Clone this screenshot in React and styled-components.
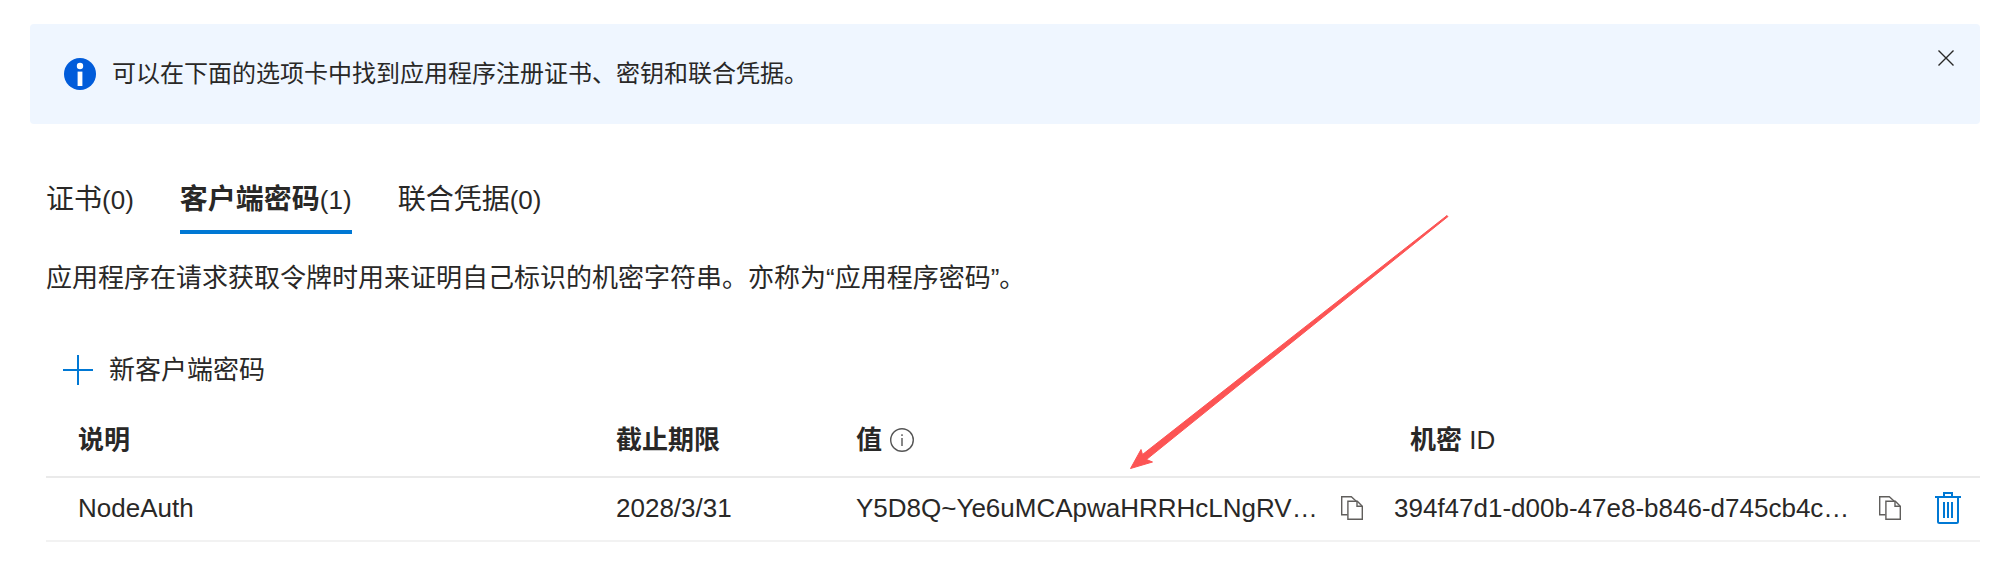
import React, { useState } from "react";
import styled, { createGlobalStyle } from "styled-components";

const GlobalStyle = createGlobalStyle`
  * {
    box-sizing: border-box;
  }

  body {
    margin: 0;
    background: #fff;
    color: #292827;
    font-family: "Liberation Sans", "Noto Sans CJK SC", sans-serif;
    font-size: 26px;
    line-height: 36px;
  }

  button {
    margin: 0;
    padding: 0;
    border: none;
    background: none;
    color: inherit;
    font: inherit;
    cursor: pointer;
  }

  svg {
    display: block;
    flex: none;
  }
`;

const StyledPage = styled.main`
  position: relative;
  padding: 24px 30px;
`;

const StyledBanner = styled.div`
  display: flex;
  align-items: flex-start;
  padding: 16px;
  border-radius: 4px;
  background: #eff6ff;
`;

const StyledMessage = styled.div`
  flex: 1;
  display: flex;
  align-items: center;
  gap: 16px;
  padding: 16px 18px;
  font-size: 24px;
`;

const StyledIconButton = styled.button`
  display: flex;
  align-items: center;
  justify-content: center;
  flex: none;
  width: 36px;
  height: 36px;
`;

const StyledContent = styled.section`
  padding-left: 16px;
`;

const StyledTabs = styled.div`
  display: flex;
  gap: 46px;
  margin-top: 46px;
`;

const StyledTab = styled.button`
  padding: 12px 0;
  border-bottom: 4px solid ${(props) => (props.$active ? "#0078d4" : "transparent")};
  font-size: 28px;
  font-weight: ${(props) => (props.$active ? 700 : 400)};
`;

const StyledCount = styled.span`
  font-size: 26px;
  font-weight: 400;
`;

const StyledDescription = styled.p`
  margin: 26px 0 0;
`;

const StyledAddButton = styled.button`
  display: flex;
  align-items: center;
  gap: 16px;
  margin-top: 56px;
  padding-left: 17px;
`;

const StyledTable = styled.table`
  width: 100%;
  margin-top: 20px;
  border-collapse: separate;
  border-spacing: 0;
  table-layout: fixed;
`;

const StyledCol = styled.col`
  width: ${(props) => (props.$width ? `${props.$width}px` : "auto")};
`;

const StyledTh = styled.th`
  padding: 14px 16px 18px 32px;
  height: 70px;
  border-bottom: 2px solid #eaeaea;
  text-align: left;
  font-weight: 700;
`;

const StyledLatin = styled.span`
  font-weight: 400;
`;

const StyledHeadLabel = styled.div`
  display: flex;
  align-items: center;
  gap: 8px;
`;

const StyledTd = styled.td`
  padding: 12px 8px 14px ${(props) => props.$left}px;
  border-bottom: 2px solid #f2f2f2;
`;

const StyledCopyCell = styled.div`
  display: flex;
  align-items: center;
  gap: 8px;
`;

const StyledValue = styled.span`
  flex: 1;
  min-width: 0;
  overflow: hidden;
  white-space: nowrap;
`;

const StyledArrow = styled.svg`
  position: absolute;
  top: 212px;
  left: 1126px;
  pointer-events: none;
`;

function InfoIcon() {
  return (
    <svg width="32" height="32" viewBox="0 0 32 32">
      <circle cx="16" cy="16" r="16" fill="#015cda" />
      <circle cx="16" cy="8" r="3.2" fill="#fff" />
      <rect x="13.6" y="13.6" width="4.8" height="14.4" fill="#fff" />
    </svg>
  );
}

function CloseIcon() {
  return (
    <svg width="16" height="16" viewBox="0 0 16 16" fill="none" stroke="#292827" strokeWidth="1.4">
      <path d="M.5.5l15 15M15.5.5l-15 15" />
    </svg>
  );
}

function PlusIcon() {
  return (
    <svg width="30" height="30" viewBox="0 0 30 30" fill="#0078d4">
      <path d="M14 0h2v14h14v2H16v14h-2V16H0v-2h14z" />
    </svg>
  );
}

function HintIcon() {
  return (
    <svg width="24" height="24" viewBox="0 0 24 24" fill="none" stroke="#555" strokeWidth="1.4">
      <circle cx="12" cy="12" r="11.3" />
      <path d="M12 10v8M12 6.2v1.8" />
    </svg>
  );
}

function CopyIcon() {
  return (
    <svg width="22" height="24" viewBox="0 0 22 24" fill="none" stroke="#605e5c" strokeWidth="1.4">
      <path d="M6.5 18.8H.7V.7h9.6l5 4.5" />
      <path d="M6.9 5.2h9.4l5 5v13.1H6.9z" />
      <path d="M16 5.2v5h5.2" />
    </svg>
  );
}

function TrashIcon() {
  return (
    <svg width="26" height="32" viewBox="0 0 26 32" fill="none" stroke="#0078d4" strokeWidth="2">
      <path d="M0 5h26M9 5V1h8v4M3 5v24.5q0 1.5 1.5 1.5h17q1.5 0 1.5-1.5V5" />
      <path d="M9 10v16M13 10v16M17 10v16" />
    </svg>
  );
}

const tabs = [
  { id: "certificates", label: "证书", count: 0 },
  { id: "secrets", label: "客户端密码", count: 1 },
  { id: "federated", label: "联合凭据", count: 0 },
];

const secrets = [
  {
    name: "NodeAuth",
    expires: "2028/3/31",
    value: "Y5D8Q~Ye6uMCApwaHRRHcLNgRV…",
    secretId: "394f47d1-d00b-47e8-b846-d745cb4c…",
  },
];

function CopyField({ text, label }) {
  return (
    <StyledCopyCell>
      <StyledValue>{text}</StyledValue>
      <StyledIconButton type="button" aria-label={label}>
        <CopyIcon />
      </StyledIconButton>
    </StyledCopyCell>
  );
}

function App() {
  const [activeTab, setActiveTab] = useState("secrets");
  const [showBanner, setShowBanner] = useState(true);

  return (
    <StyledPage>
      <GlobalStyle />
      {showBanner && (
        <StyledBanner>
          <StyledMessage>
            <InfoIcon />
            <span>可以在下面的选项卡中找到应用程序注册证书、密钥和联合凭据。</span>
          </StyledMessage>
          <StyledIconButton type="button" aria-label="关闭" onClick={() => setShowBanner(false)}>
            <CloseIcon />
          </StyledIconButton>
        </StyledBanner>
      )}

      <StyledContent>
        <StyledTabs role="tablist">
          {tabs.map((tab) => (
            <StyledTab
              key={tab.id}
              type="button"
              role="tab"
              aria-selected={tab.id === activeTab}
              $active={tab.id === activeTab}
              onClick={() => setActiveTab(tab.id)}
            >
              {tab.label}
              <StyledCount>({tab.count})</StyledCount>
            </StyledTab>
          ))}
        </StyledTabs>

        <StyledDescription>
          应用程序在请求获取令牌时用来证明自己标识的机密字符串。亦称为“应用程序密码”。
        </StyledDescription>

        <StyledAddButton type="button">
          <PlusIcon />
          新客户端密码
        </StyledAddButton>

        <StyledTable>
          <colgroup>
            <StyledCol />
            <StyledCol $width={240} />
            <StyledCol $width={554} />
            <StyledCol />
            <StyledCol $width={64} />
          </colgroup>
          <thead>
            <tr>
              <StyledTh scope="col">说明</StyledTh>
              <StyledTh scope="col">截止期限</StyledTh>
              <StyledTh scope="col">
                <StyledHeadLabel>
                  值
                  <HintIcon />
                </StyledHeadLabel>
              </StyledTh>
              <StyledTh scope="col">
                机密 <StyledLatin>ID</StyledLatin>
              </StyledTh>
              <StyledTh as="td" />
            </tr>
          </thead>
          <tbody>
            {secrets.map((secret) => (
              <tr key={secret.name}>
                <StyledTd $left={32}>{secret.name}</StyledTd>
                <StyledTd $left={32}>{secret.expires}</StyledTd>
                <StyledTd $left={32}>
                  <CopyField text={secret.value} label="复制值" />
                </StyledTd>
                <StyledTd $left={16}>
                  <CopyField text={secret.secretId} label="复制机密 ID" />
                </StyledTd>
                <StyledTd $left={14}>
                  <StyledIconButton type="button" aria-label="删除">
                    <TrashIcon />
                  </StyledIconButton>
                </StyledTd>
              </tr>
            ))}
          </tbody>
        </StyledTable>
      </StyledContent>

      <StyledArrow
        width="326"
        height="260"
        viewBox="0 0 326 260"
        fill="#fc5454"
        stroke="#fc5454"
        strokeLinejoin="round"
        aria-hidden="true"
      >
        <path d="M4.5 256.5L15 237.5L16.5 242.5L321 3.5L322 4.5L20.5 247.5L26.5 250Z" />
      </StyledArrow>
    </StyledPage>
  );
}

export default App;
